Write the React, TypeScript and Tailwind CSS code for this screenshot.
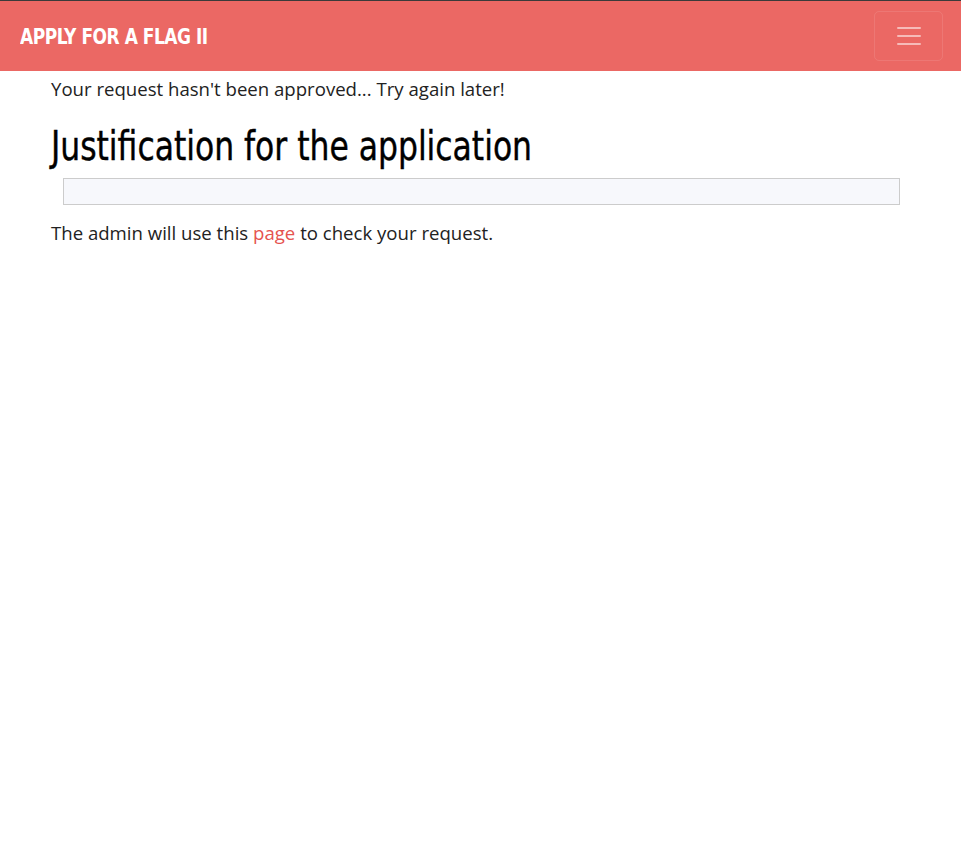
import React from 'react'

export default function App() {
  return (
    <div className="min-h-[842px] bg-white font-['Open_Sans',sans-serif] text-[#222]">
      <nav className="flex h-[71px] items-center justify-between border-t border-[#3a3a3a] bg-[#eb6864] pl-5 pr-[18px]">
        <a
          href="#"
          className="inline-block origin-left scale-x-[0.86] font-['DejaVu_Sans_Condensed',sans-serif] text-[22px] font-bold tracking-tight text-white"
        >
          APPLY FOR A FLAG II
        </a>
        <button className="flex h-[50px] w-[69px] items-center justify-center rounded-[5px] border border-white/10">
          <svg width="30" height="30" viewBox="0 0 30 30">
            <path
              d="M4 7h22M4 15h22M4 23h22"
              stroke="rgba(255,255,255,0.55)"
              strokeWidth="2"
              strokeLinecap="round"
            />
          </svg>
        </button>
      </nav>

      <main className="px-[51px]">
        <p className="mt-[5px] text-[18.6px] leading-[26px]">
          Your request hasn't been approved... Try again later!
        </p>
        <h1 className="mt-[20px] origin-left scale-x-[0.873] whitespace-nowrap font-['DejaVu_Sans_Condensed',sans-serif] text-[40px] leading-[48px] text-black [-webkit-text-stroke:0.4px_black]">
          Justification for the application
        </h1>
        <pre className="ml-3 mr-[10px] mt-[8px] h-[27px] border border-[#ccc] bg-[#f7f8fc]"></pre>
        <p className="mt-[15px] text-[18.6px] leading-[26px]">
          The admin will use this{' '}
          <a href="#" className="text-[#e5534f]">
            page
          </a>{' '}
          to check your request.
        </p>
      </main>
    </div>
  )
}
